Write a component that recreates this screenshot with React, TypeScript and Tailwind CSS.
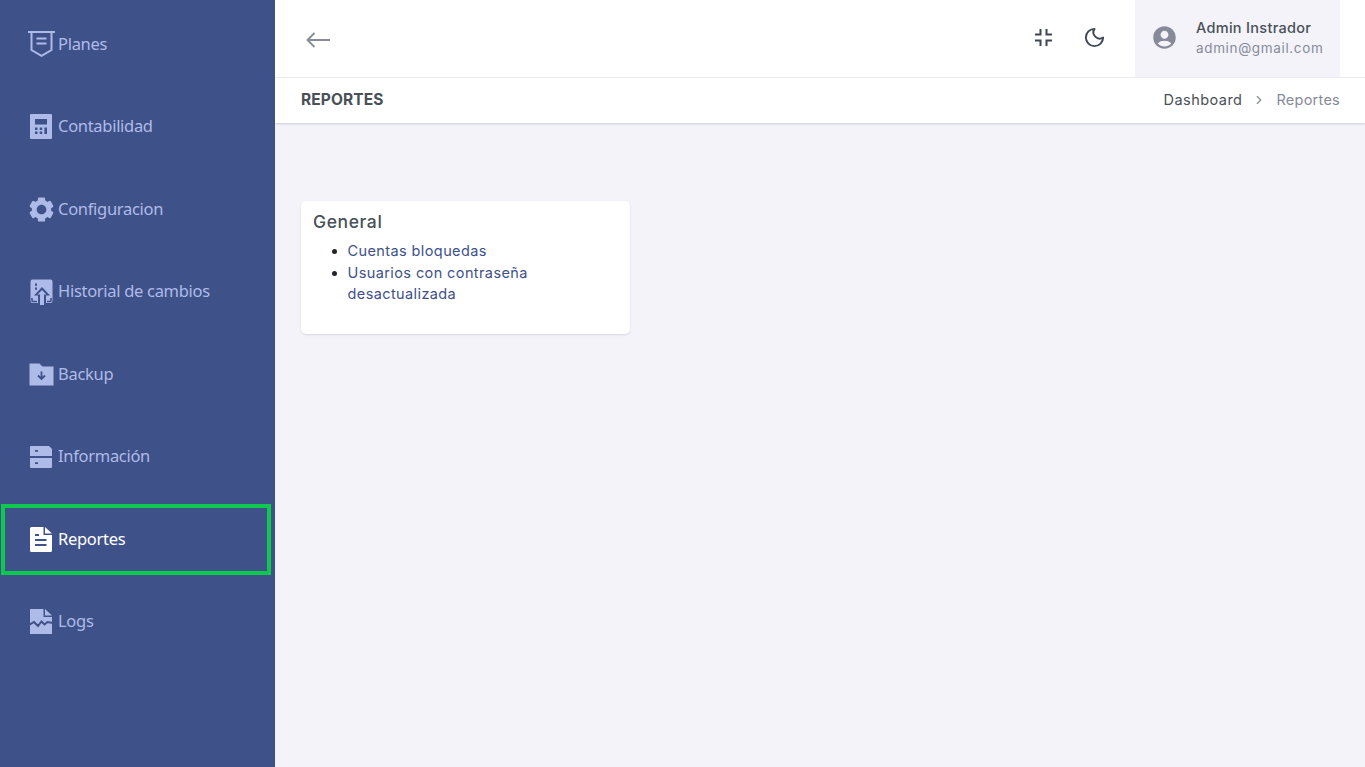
import { MdAccountCircle } from "react-icons/md";
import { BiSolidCog } from "react-icons/bi";
import { ChevronRight } from "lucide-react";
import type { ReactNode } from "react";

const PlanIcon = () => (
  <svg viewBox="0 0 27 26" className="h-[26px] w-[27px]" fill="none" stroke="currentColor" strokeWidth="2" aria-hidden>
    <path d="M0 1H27" />
    <path d="M3.5 1V19L13.5 24.8L23.5 19V1" />
    <path d="M8.5 7.5H18.5M8.5 12.5H18.5" />
  </svg>
);

const CalcIcon = () => (
  <svg viewBox="0 0 22 25" className="h-[25px] w-[22px]" aria-hidden>
    <rect width="22" height="25" rx="1" fill="currentColor" />
    <path fill="#3f5189" d="M5 5H17V10.5H5ZM5 13.5H7.5V16H5ZM9.7 13.5H12.2V16H9.7ZM14.4 13.5H17V20H14.4ZM5 17.5H7.5V20H5ZM9.7 17.5H12.2V20H9.7Z" />
  </svg>
);

const HistoryIcon = () => (
  <svg viewBox="0 0 24 26" className="h-[26px] w-[24px]" aria-hidden>
    <path fill="currentColor" d="M1.5 2.5A2 2 0 0 1 3.5 .5H21.5A2 2 0 0 1 23.5 2.5V22A2 2 0 0 1 21.5 24H3.5A2 2 0 0 1 1.5 22Z" />
    <path fill="#3f5189" d="M6 4.5H8V6.7H6ZM6 8.5H8V10.7H6Z" />
    <path fill="none" stroke="#3f5189" strokeWidth="1.6" d="M3 19V21.5A1 1 0 0 0 4 22.5H8M18 22.5H21A1 1 0 0 0 22 21.5V19" />
    <path fill="#3f5189" d="M13 8L21 16.5H17V26H9V16.5H5Z" />
    <path fill="currentColor" d="M13 11L17.5 15.5H15V26H11V15.5H8.5Z" />
  </svg>
);

const FolderIcon = () => (
  <svg viewBox="0 0 25 23" className="h-[23px] w-[25px]" aria-hidden>
    <path fill="currentColor" d="M.5 .5H10.5L13.5 3.5H24.5V22.5H.5Z" />
    <path fill="none" stroke="#3f5189" strokeWidth="1.8" d="M12.5 8.5V16M9 12.5L12.5 16L16 12.5" />
  </svg>
);

const StorageIcon = () => (
  <svg viewBox="0 0 22 22" className="h-[22px] w-[22px]" aria-hidden>
    <path fill="currentColor" d="M0 1A1 1 0 0 1 1 0H19L22 3V10H0Z" />
    <path fill="currentColor" d="M0 12H22V21A1 1 0 0 1 21 22H1A1 1 0 0 1 0 21Z" />
    <path fill="#3f5189" d="M5 4H8V5.8H5ZM5 16.3H8V18.1H5Z" />
  </svg>
);

const ReportIcon = () => (
  <svg viewBox="0 0 24 25" className="h-[25px] w-[24px]" aria-hidden>
    <path fill="currentColor" d="M1 1.5A1.5 1.5 0 0 1 2.5 0H14.5V8H23V23.5A1.5 1.5 0 0 1 21.5 25H2.5A1.5 1.5 0 0 1 1 23.5Z" />
    <path fill="currentColor" d="M16 0L23 6.5H16Z" />
    <path fill="none" stroke="#3f5189" strokeWidth="2" d="M6 8H10M6 13H17.5M6 18H17.5" />
  </svg>
);

const LogIcon = () => (
  <svg viewBox="0 0 24 25" className="h-[25px] w-[24px]" aria-hidden>
    <path fill="currentColor" d="M1 0H14.5V8H23V25H1Z" />
    <path fill="currentColor" d="M16 0L23 6.5H16Z" />
    <path fill="none" stroke="#3f5189" strokeWidth="2" d="M0 16L5 13L9 17L12.5 12.5L15.5 15.5L18.5 13L24 14" />
  </svg>
);

const ExitFullscreen = () => (
  <svg viewBox="0 0 17 17" className="h-[17px] w-[17px]" fill="none" stroke="#3f4752" strokeWidth="2" aria-hidden>
    <path d="M0 5.5H5.5V0M11.5 0V5.5H17M0 11.5H5.5V17M11.5 17V11.5H17" />
  </svg>
);

const Moon = () => (
  <svg viewBox="0 0 24 24" className="h-[23px] w-[23px]" fill="none" stroke="#3f4752" strokeWidth="2" strokeLinejoin="round" aria-hidden>
    <path d="M12 3a6.5 6.5 0 0 0 9 9 9 9 0 1 1-9-9Z" />
  </svg>
);

const items: { label: string; icon: ReactNode; active?: boolean }[] = [
  { label: "Planes", icon: <PlanIcon /> },
  { label: "Contabilidad", icon: <CalcIcon /> },
  { label: "Configuracion", icon: <BiSolidCog className="h-[29px] w-[29px]" /> },
  { label: "Historial de cambios", icon: <HistoryIcon /> },
  { label: "Backup", icon: <FolderIcon /> },
  { label: "Información", icon: <StorageIcon /> },
  { label: "Reportes", icon: <ReportIcon />, active: true },
  { label: "Logs", icon: <LogIcon /> },
];

export default function App() {
  return (
    <div className="flex h-[767px] w-[1365px] overflow-hidden bg-[#f3f3f9] font-['Inter','Liberation_Sans',sans-serif]">
      <aside className="w-[275px] shrink-0 bg-[#3f5189] pt-[3px]">
        {items.map((item) => (
          <div
            key={item.label}
            className={`relative flex h-[82.5px] items-center pl-[24px] ${item.active ? "text-white" : "text-[#aebbe8]"}`}
          >
            <span className="flex w-[34px] justify-center">{item.icon}</span>
            <span className="font-['Noto_Sans',sans-serif] text-[16.5px] font-normal tracking-[-0.3px]">
              {item.label}
            </span>
            {item.active && (
              <span className="absolute left-[1px] top-[6px] h-[71px] w-[270px] border-[4px] border-[#0fc94f]" />
            )}
          </div>
        ))}
      </aside>

      <div className="flex min-w-0 flex-1 flex-col">
        <header className="flex h-[78px] items-stretch border-b border-[#eeeef2] bg-white pl-[31px] pr-[25px]">
          <svg viewBox="0 0 24 16" className="my-auto h-[16px] w-[24px] translate-y-[1px]" fill="none" stroke="#878a99" strokeWidth="1.8" aria-hidden>
            <path d="M24 8H1.5M8.5 1L1.5 8L8.5 15" />
          </svg>
          <div className="ml-auto mr-[29px] flex items-center gap-[31px] pb-[3px]">
            <ExitFullscreen />
            <Moon />
          </div>
          <div className="flex w-[205px] items-center bg-[#f3f3f9] pb-[2px] pl-[16px]">
            <MdAccountCircle className="h-[27px] w-[27px] text-[#878a99]" />
            <div className="ml-[18px]">
              <div className="text-[14.5px] font-medium leading-[20px] tracking-[0.3px] text-[#495057]">Admin Instrador</div>
              <div className="text-[13.5px] leading-[20px] tracking-[0.65px] text-[#878a99]">admin@gmail.com</div>
            </div>
          </div>
        </header>

        <div className="flex h-[45px] items-center justify-between bg-white pb-[2px] pl-[26px] pr-[25px] shadow-[0_1px_2px_rgba(56,65,74,0.2)]">
          <h1 className="text-[15.5px] font-bold tracking-[0.1px] text-[#495057]">REPORTES</h1>
          <div className="flex items-center text-[14.5px]">
            <span className="tracking-[0.45px] text-[#495057]">Dashboard</span>
            <ChevronRight className="mx-[10px] h-[14px] w-[14px] text-[#878a99]" />
            <span className="tracking-[0.25px] text-[#878a99]">Reportes</span>
          </div>
        </div>

        <main className="pl-[26px] pt-[78px]">
          <section className="h-[133px] w-[329px] rounded-[5px] bg-white pl-[12px] pt-[9px] shadow-[0_1px_2px_rgba(56,65,74,0.15)]">
            <h2 className="text-[17.5px] font-medium leading-[24px] tracking-[0.6px] text-[#495057]">General</h2>
            <ul className="mt-[6px] list-disc pl-[34.5px] pr-[80px] text-[14.5px] leading-[21.5px] tracking-[0.4px] text-[#405189] marker:text-[#212529]">
              <li>Cuentas bloquedas</li>
              <li>Usuarios con contraseña desactualizada</li>
            </ul>
          </section>
        </main>
      </div>
    </div>
  );
}
